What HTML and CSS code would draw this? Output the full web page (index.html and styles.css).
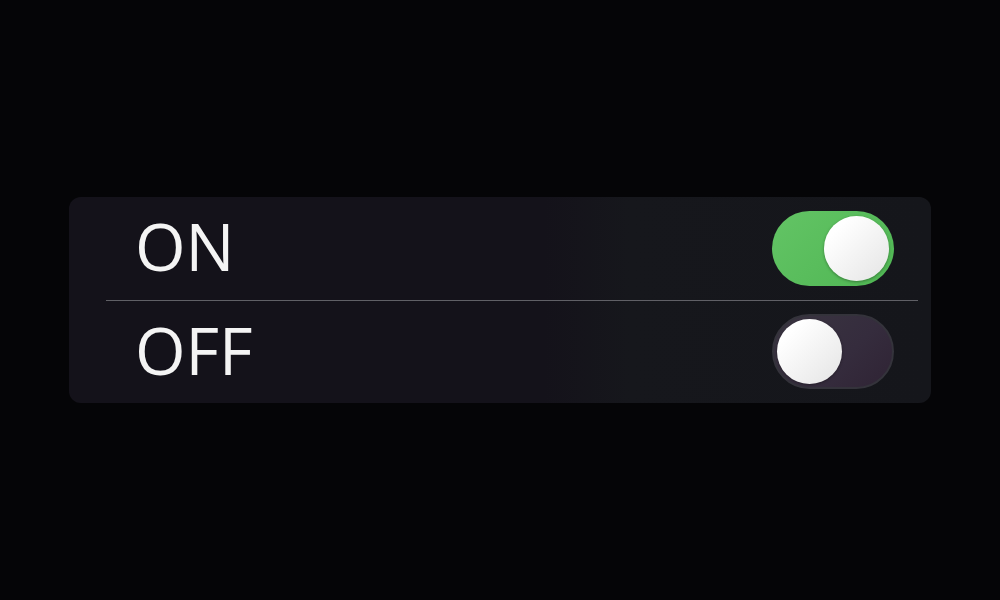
FILE: index.html
```html
<!DOCTYPE html>
<html lang="en">

<head>
    <meta charset="UTF-8">
    <meta name="viewport" content="width=device-width, initial-scale=1.0">
    <title>On / Off</title>
    <link rel="stylesheet" href="styles.css">
</head>

<body>
    <div class="panel">
        <div class="row">
            <span class="label">ON</span>
            <div class="toggle toggle-on">
                <span class="knob"></span>
            </div>
        </div>
        <div class="divider"></div>
        <div class="row">
            <span class="label">OFF</span>
            <div class="toggle toggle-off">
                <span class="knob"></span>
            </div>
        </div>
    </div>
</body>

</html>
```

FILE: styles.css
```css
body {
    font-family: "Open Sans", "Noto Sans", sans-serif;
    background-color: #050507;
    margin: 0;
    padding: 0;
    height: 100vh;
    display: flex;
    align-items: center;
    justify-content: center;
}

.panel {
    width: 862px;
    height: 206px;
    border-radius: 12px;
    background: linear-gradient(90deg, #14121a 0%, #14121a 55%, #16171c 65%, #15161b 100%);
    display: flex;
    flex-direction: column;
}

.row {
    flex: 1;
    display: flex;
    align-items: center;
    justify-content: space-between;
    padding: 0 37px 0 66px;
}

.label {
    color: #f4f4f4;
    font-size: 65px;
    line-height: 1;
    margin-bottom: 3px;
}

.divider {
    height: 1px;
    margin: 0 13px 0 37px;
    background-color: #606066;
}

.toggle {
    width: 122px;
    height: 75px;
    border-radius: 38px;
    box-sizing: border-box;
    padding: 5px;
    display: flex;
    align-items: center;
}

.toggle-on {
    justify-content: flex-end;
    background: linear-gradient(135deg, #63c465, #4fb653);
}

.toggle-off {
    justify-content: flex-start;
    border: 2px solid #34333b;
    padding: 3px;
    background: linear-gradient(135deg, #3a3541 0%, #352c3d 60%, #2f2334 100%);
}

.knob {
    width: 65px;
    height: 65px;
    border-radius: 50%;
    background: linear-gradient(135deg, #ffffff 20%, #e4e4e4 100%);
    box-shadow: 0 1px 3px rgba(0, 0, 0, 0.35);
}
```
